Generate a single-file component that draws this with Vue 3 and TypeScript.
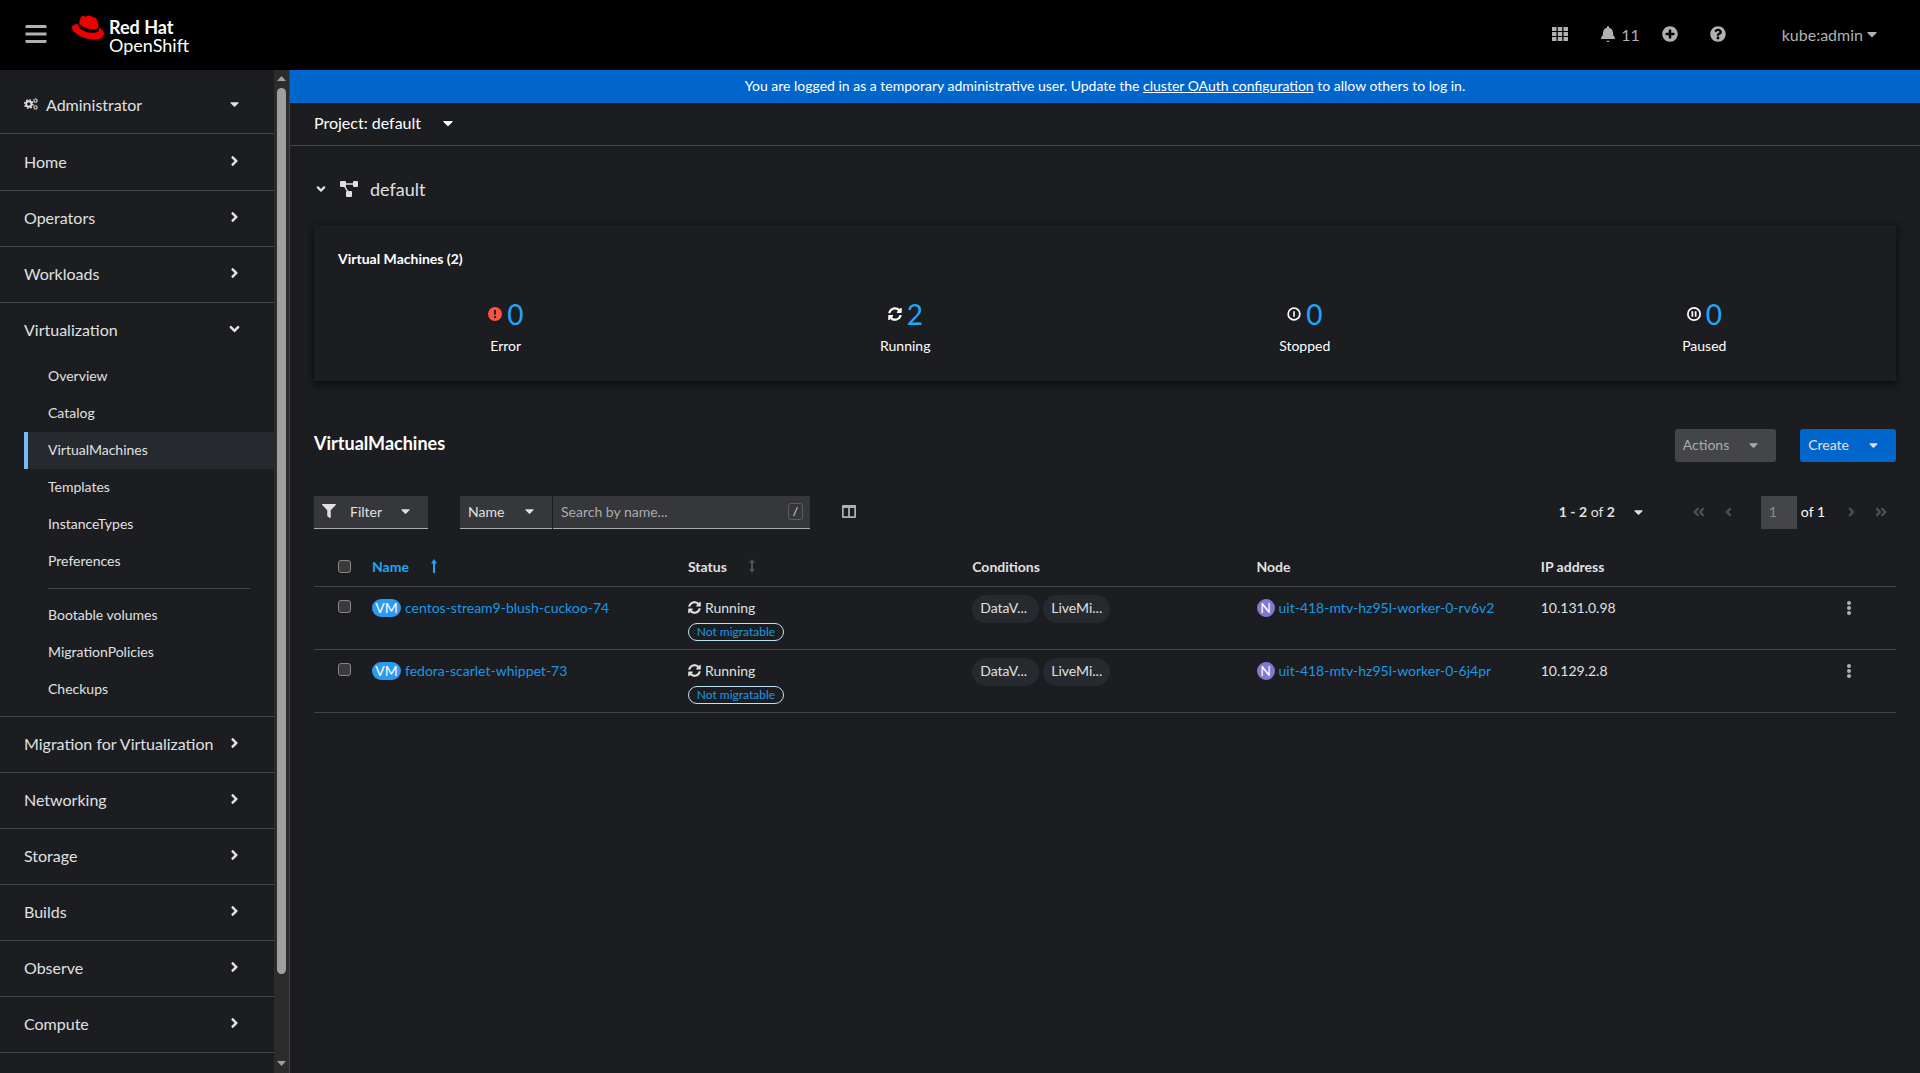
<script setup lang="ts">
import { ref } from 'vue'

interface VirtualMachine {
  name: string
  node: string
  ip: string
}

const icons: Record<string, { box: string; d: string }> = {
  caret: {
    box: '0 0 320 512',
    d: 'M31.3 192h257.3c17.8 0 26.7 21.5 14.1 34.1L174.1 354.8c-7.8 7.8-20.5 7.8-28.3 0L17.2 226.1C4.6 213.5 13.5 192 31.3 192z',
  },
  angle: {
    box: '0 0 256 512',
    d: 'M224.3 273l-136 136c-9.4 9.4-24.6 9.4-33.9 0l-22.6-22.6c-9.4-9.4-9.4-24.6 0-33.9l96.4-96.4-96.4-96.4c-9.4-9.4-9.4-24.6 0-33.9L54.3 103c9.4-9.4 24.6-9.4 33.9 0l136 136c9.5 9.4 9.5 24.6.1 34z',
  },
  bell: {
    box: '0 0 448 512',
    d: 'M224 512c35.3 0 50-20 50-40H174c0 20 14.7 40 50 40zm215.4-149.7c-19.3-20.8-55.5-52-55.5-154.3 0-77.7-54.5-139.9-127.9-155.2V32c0-17.7-14.3-32-32-32s-32 14.3-32 32v20.8C118.6 68.1 64.1 130.3 64.1 208c0 102.3-36.2 133.5-55.5 154.3-6 6.4-8.7 14.2-8.6 21.7.1 16.4 13 32 32.1 32h383.8c19.1 0 32-15.6 32.1-32 .05-7.5-2.6-15.3-8.6-21.7z',
  },
  plus: {
    box: '0 0 512 512',
    d: 'M256 8C119 8 8 119 8 256s111 248 248 248 248-111 248-248S393 8 256 8zm144 276c0 6.6-5.4 12-12 12h-92v92c0 6.6-5.4 12-12 12h-56c-6.6 0-12-5.4-12-12v-92h-92c-6.6 0-12-5.4-12-12v-56c0-6.6 5.4-12 12-12h92v-92c0-6.6 5.4-12 12-12h56c6.6 0 12 5.4 12 12v92h92c6.6 0 12 5.4 12 12v56z',
  },
  help: {
    box: '0 0 512 512',
    d: 'M504 256c0 136.997-111.043 248-248 248S8 392.997 8 256C8 119.083 119.043 8 256 8s248 111.083 248 248zM262.655 90c-54.497 0-89.255 22.957-116.549 63.758-3.536 5.286-2.353 12.415 2.715 16.258l34.699 26.31c5.205 3.947 12.621 3.008 16.665-2.122 17.864-22.658 30.113-35.797 57.303-35.797 20.429 0 45.698 13.148 45.698 32.958 0 14.976-12.363 22.667-32.534 33.976C247.128 238.528 216 254.941 216 296v4c0 6.627 5.373 12 12 12h56c6.627 0 12-5.373 12-12v-1.333c0-28.462 83.186-29.647 83.186-106.667 0-58.002-60.165-102-116.531-102zM256 338c-25.365 0-46 20.635-46 46 0 25.364 20.635 46 46 46s46-20.636 46-46c0-25.364-20.635-46-46-46z',
  },
  sync: {
    box: '0 0 512 512',
    d: 'M370.72 133.28C339.458 104.008 298.888 87.962 255.848 88c-77.458.068-144.328 53.178-162.791 126.85-1.344 5.363-6.122 9.15-11.651 9.15H24.103c-7.498 0-13.194-6.807-11.807-14.176C33.933 94.924 134.813 8 256 8c66.448 0 126.791 26.136 171.315 68.685L463.03 40.97C478.149 25.851 504 36.559 504 57.941V192c0 13.255-10.745 24-24 24H345.941c-21.382 0-32.09-25.851-16.971-40.971l41.75-41.749zM32 296h134.059c21.382 0 32.09 25.851 16.971 40.971l-41.75 41.75c31.262 29.273 71.835 45.319 114.876 45.28 77.418-.07 144.315-53.144 162.787-126.849 1.344-5.363 6.122-9.15 11.651-9.15h57.304c7.498 0 13.194 6.807 11.807 14.176C478.067 417.076 377.187 504 256 504c-66.448 0-126.791-26.136-171.315-68.685L48.97 471.03C33.851 486.149 8 475.441 8 454.059V320c0-13.255 10.745-24 24-24z',
  },
  filter: {
    box: '0 0 512 512',
    d: 'M487.976 0H24.028C2.71 0-8.047 25.866 7.058 40.971L192 225.941V432c0 7.831 3.821 15.17 10.237 19.662l80 55.98C298.02 518.69 320 507.493 320 487.98V225.941l184.947-184.97C520.021 25.896 509.338 0 487.976 0z',
  },
  error: {
    box: '0 0 14 14',
    d: 'M7 0a7 7 0 1 1 0 14A7 7 0 0 1 7 0zM5.9 3l.3 4.8h1.6L8.1 3zM7 8.9a1.2 1.2 0 1 0 0 2.4 1.2 1.2 0 0 0 0-2.4z',
  },
  stopped: {
    box: '0 0 14 14',
    d: 'M7 .3a6.7 6.7 0 1 1 0 13.4A6.7 6.7 0 0 1 7 .3zM7 2a5 5 0 1 0 0 10A5 5 0 0 0 7 2zM6.2 4.2h1.6v5.6H6.2z',
  },
  paused: {
    box: '0 0 14 14',
    d: 'M7 0a7 7 0 1 1 0 14A7 7 0 0 1 7 0zM7 1.7a5.3 5.3 0 1 0 0 10.6A5.3 5.3 0 0 0 7 1.7zM4.5 4.2h1.7v5.6H4.5zM7.8 4.2h1.7v5.6H7.8z',
  },
}

const sectionsBefore = ['Home', 'Operators', 'Workloads']
const sectionsAfter = ['Migration for Virtualization', 'Networking', 'Storage', 'Builds', 'Observe', 'Compute']
const virtualizationMain = ['Overview', 'Catalog', 'VirtualMachines', 'Templates', 'InstanceTypes', 'Preferences']
const virtualizationExtra = ['Bootable volumes', 'MigrationPolicies', 'Checkups']

const statuses = [
  { label: 'Error', count: 0, icon: 'error' },
  { label: 'Running', count: 2, icon: 'sync' },
  { label: 'Stopped', count: 0, icon: 'stopped' },
  { label: 'Paused', count: 0, icon: 'paused' },
]

const machines: VirtualMachine[] = [
  { name: 'centos-stream9-blush-cuckoo-74', node: 'uit-418-mtv-hz95l-worker-0-rv6v2', ip: '10.131.0.98' },
  { name: 'fedora-scarlet-whippet-73', node: 'uit-418-mtv-hz95l-worker-0-6j4pr', ip: '10.129.2.8' },
]

const search = ref('')
</script>

<template>
  <div class="page">
    <header class="masthead">
      <button class="plain menu" aria-label="Global navigation">
        <svg width="22" height="20" viewBox="0 0 22 20"><path d="M1.5 1h19a1 1 0 0 1 1 1v2h-21V2a1 1 0 0 1 1-1zM.5 8.500h21v3H.5zM.5 16h21v2a1 1 0 0 1-1 1h-19a1 1 0 0 1-1-1z" /></svg>
      </button>
      <a class="brand" href="#" aria-label="Red Hat OpenShift">
        <svg class="hat" width="32" height="25" viewBox="0 2.9 24 18.2">
          <path d="M16.009 13.386c1.577 0 3.86-.326 3.86-2.202a1.765 1.765 0 0 0-.04-.431l-.94-4.08c-.216-.898-.406-1.305-1.982-2.093-1.223-.625-3.888-1.658-4.676-1.658-.733 0-.947.946-1.822.946-.842 0-1.467-.706-2.255-.706-.757 0-1.25.515-1.63 1.576 0 0-1.06 2.99-1.197 3.424a.81.81 0 0 0-.028.245c0 1.162 4.577 4.974 10.71 4.974m4.101-1.435c.218 1.032.218 1.14.218 1.277 0 1.765-1.984 2.745-4.593 2.745-5.895.004-11.06-3.451-11.06-5.734a2.326 2.326 0 0 1 .19-.925C2.746 9.415 0 9.794 0 12.217c0 3.969 9.405 8.861 16.851 8.861 5.71 0 7.149-2.582 7.149-4.62 0-1.605-1.387-3.425-3.887-4.512" />
        </svg>
        <span class="wordmark"><b>Red Hat</b><span>OpenShift</span></span>
      </a>
      <div class="tools">
        <button class="plain apps" aria-label="Application launcher">
          <svg width="16" height="14" viewBox="0 0 16 14"><path d="M0 0h4.5v4H0zM5.8 0h4.4v4H5.8zM11.5 0H16v4h-4.5zM0 5h4.5v4H0zM5.8 5h4.4v4H5.8zM11.5 5H16v4h-4.5zM0 10h4.5v4H0zM5.8 10h4.4v4H5.8zM11.5 10H16v4h-4.5z" /></svg>
        </button>
        <button class="plain alerts" aria-label="11 notifications">
          <svg width="14" height="16" :viewBox="icons.bell.box"><path :d="icons.bell.d" /></svg>
          <span>11</span>
        </button>
        <button class="plain" aria-label="Quick create"><svg width="16" height="16" :viewBox="icons.plus.box"><path :d="icons.plus.d" /></svg></button>
        <button class="plain" aria-label="Help"><svg width="16" height="16" :viewBox="icons.help.box"><path :d="icons.help.d" /></svg></button>
        <button class="plain user">kube:admin<svg width="10" height="16" :viewBox="icons.caret.box"><path :d="icons.caret.d" /></svg></button>
      </div>
    </header>

    <div class="body">
      <aside class="sidebar">
        <nav class="nav">
          <div class="perspective">
            <button class="plain nav-button">
              <svg class="cogs" width="14" height="12" viewBox="0 0 14 12">
                <circle cx="4.8" cy="6" r="2.7" stroke-width="1.9" />
                <circle cx="4.8" cy="6" r="4.2" stroke-width="1.4" stroke-dasharray="1.7 1.6" />
                <circle cx="11.6" cy="2.6" r="1.4" stroke-width="1" />
                <circle cx="11.6" cy="2.6" r="2.1" stroke-width=".7" stroke-dasharray="1 .65" />
                <circle cx="11.6" cy="9.4" r="1.4" stroke-width="1" />
                <circle cx="11.6" cy="9.4" r="2.1" stroke-width=".7" stroke-dasharray="1 .65" />
              </svg>
              <span class="grow">Administrator</span>
              <svg width="9" height="14" :viewBox="icons.caret.box"><path :d="icons.caret.d" /></svg>
            </button>
          </div>
          <ul class="sections">
            <li v-for="label in sectionsBefore" :key="label">
              <button class="plain nav-button"><span class="grow">{{ label }}</span><svg width="9" height="16" :viewBox="icons.angle.box"><path :d="icons.angle.d" /></svg></button>
            </li>
            <li>
              <button class="plain nav-button" aria-expanded="true"><span class="grow">Virtualization</span><svg class="down" width="9" height="16" :viewBox="icons.angle.box"><path :d="icons.angle.d" /></svg></button>
              <div class="children">
                <a v-for="label in virtualizationMain" :key="label" href="#" :class="{ current: label === 'VirtualMachines' }">{{ label }}</a>
                <hr />
                <a v-for="label in virtualizationExtra" :key="label" href="#">{{ label }}</a>
              </div>
            </li>
            <li v-for="label in sectionsAfter" :key="label">
              <button class="plain nav-button"><span class="grow">{{ label }}</span><svg width="9" height="16" :viewBox="icons.angle.box"><path :d="icons.angle.d" /></svg></button>
            </li>
          </ul>
        </nav>
        <div class="scrollbar" aria-hidden="true">
          <svg width="9" height="5" viewBox="0 0 9 5"><path d="M4.5 0L9 5H0z" /></svg>
          <div class="track"><div class="thumb"></div><div class="rest"></div></div>
          <svg width="9" height="5" viewBox="0 0 9 5"><path d="M0 0h9L4.5 5z" /></svg>
        </div>
      </aside>

      <main class="main">
        <div class="banner">You are logged in as a temporary administrative user. Update the <a href="#">cluster OAuth configuration</a> to allow others to log in.</div>
        <div class="project-bar">
          <button class="plain project">Project: default<svg width="10" height="16" :viewBox="icons.caret.box"><path :d="icons.caret.d" /></svg></button>
        </div>

        <div class="content">
          <button class="plain group">
            <svg class="down" width="14" height="14" :viewBox="icons.angle.box"><path :d="icons.angle.d" /></svg>
            <svg width="18" height="16" viewBox="0 0 18 16"><path d="M1 0h4a1 1 0 0 1 1 1v1.3h7V1a1 1 0 0 1 1-1h3a1 1 0 0 1 1 1v4a1 1 0 0 1-1 1h-3a1 1 0 0 1-1-1V3.7H6V5a1 1 0 0 1-.3.7L8.2 10H11a1 1 0 0 1 1 1v4a1 1 0 0 1-1 1H7a1 1 0 0 1-1-1v-4l.7-.8L4.2 6H1a1 1 0 0 1-1-1V1a1 1 0 0 1 1-1z" /></svg>
            <span>default</span>
          </button>

          <section class="card">
            <h2>Virtual Machines (2)</h2>
            <div class="status-grid">
              <div v-for="s in statuses" :key="s.label" class="status">
                <div class="count">
                  <svg :class="s.icon" width="14" height="14" :viewBox="icons[s.icon].box"><path fill-rule="evenodd" :d="icons[s.icon].d" /></svg>
                  <a href="#">{{ s.count }}</a>
                </div>
                <span>{{ s.label }}</span>
              </div>
            </div>
          </section>

          <div class="title-row">
            <h1>VirtualMachines</h1>
            <div class="actions">
              <button class="action" disabled>Actions<svg width="9" height="14" :viewBox="icons.caret.box"><path :d="icons.caret.d" /></svg></button>
              <button class="action primary">Create<svg width="9" height="14" :viewBox="icons.caret.box"><path :d="icons.caret.d" /></svg></button>
            </div>
          </div>

          <div class="toolbar">
            <button class="field filter">
              <svg width="14" height="14" :viewBox="icons.filter.box"><path :d="icons.filter.d" /></svg>
              <span class="grow">Filter</span>
              <svg width="9" height="14" :viewBox="icons.caret.box"><path :d="icons.caret.d" /></svg>
            </button>
            <div class="search-group">
              <div class="field attribute">
                <select aria-label="Filter attribute"><option>Name</option><option>Label</option></select>
                <svg width="9" height="14" :viewBox="icons.caret.box"><path :d="icons.caret.d" /></svg>
              </div>
              <div class="field search">
                <input v-model="search" type="text" placeholder="Search by name..." aria-label="Search by name" />
                <kbd>/</kbd>
              </div>
            </div>
            <button class="plain columns" aria-label="Manage columns">
              <svg width="14" height="13" viewBox="0 0 14 13"><path fill-rule="evenodd" d="M1 0h12a1 1 0 0 1 1 1v11a1 1 0 0 1-1 1H1a1 1 0 0 1-1-1V1a1 1 0 0 1 1-1zM1.7 3v8.3h4.4V3zM7.900 3v8.300h4.400V3z" /></svg>
            </button>
            <div class="pagination">
              <button class="plain range"><span><b>1 - 2</b> of <b>2</b></span><svg width="9" height="14" :viewBox="icons.caret.box"><path :d="icons.caret.d" /></svg></button>
              <button class="plain step" disabled aria-label="First page">
                <svg class="back" width="12" height="14" viewBox="0 0 440 512"><path :d="icons.angle.d" /><path transform="translate(192 0)" :d="icons.angle.d" /></svg>
              </button>
              <button class="plain step" disabled aria-label="Previous page"><svg class="back" width="7" height="14" :viewBox="icons.angle.box"><path :d="icons.angle.d" /></svg></button>
              <label class="page-number"><input type="text" value="1" disabled aria-label="Current page" /><span>of 1</span></label>
              <button class="plain step" disabled aria-label="Next page"><svg width="7" height="14" :viewBox="icons.angle.box"><path :d="icons.angle.d" /></svg></button>
              <button class="plain step" disabled aria-label="Last page">
                <svg width="12" height="14" viewBox="0 0 440 512"><path :d="icons.angle.d" /><path transform="translate(192 0)" :d="icons.angle.d" /></svg>
              </button>
            </div>
          </div>

          <table class="vms">
            <colgroup>
              <col class="c-check" /><col class="c-name" /><col /><col /><col /><col /><col class="c-menu" />
            </colgroup>
            <thead>
              <tr>
                <th class="check"><input type="checkbox" aria-label="Select all rows" /></th>
                <th><button class="plain sort sorted">Name<svg width="6" height="14" viewBox="0 0 6 14"><path d="M3 0l3 4.5H4V14H2V4.5H0z" /></svg></button></th>
                <th><button class="plain sort">Status<svg width="6" height="14" viewBox="0 0 6 14"><path d="M3 0l3 4H4v6h2l-3 4-3-4h2V4H0z" /></svg></button></th>
                <th>Conditions</th>
                <th>Node</th>
                <th>IP address</th>
                <th></th>
              </tr>
            </thead>
            <tbody>
              <tr v-for="vm in machines" :key="vm.name">
                <td class="check"><input type="checkbox" :aria-label="'Select ' + vm.name" /></td>
                <td><div class="line"><span class="badge vm">VM</span><a href="#">{{ vm.name }}</a></div></td>
                <td>
                  <div class="line"><svg width="13" height="13" :viewBox="icons.sync.box"><path :d="icons.sync.d" /></svg>Running</div>
                  <a class="pill" href="#">Not migratable</a>
                </td>
                <td class="conditions"><div class="chips"><span>DataV...</span><span>LiveMi...</span></div></td>
                <td><div class="line"><span class="badge node">N</span><a href="#">{{ vm.node }}</a></div></td>
                <td><div class="line">{{ vm.ip }}</div></td>
                <td class="menu-cell">
                  <button class="plain" :aria-label="'Actions for ' + vm.name"><svg width="4" height="14" viewBox="0 0 4 14"><circle cx="2" cy="2" r="2" /><circle cx="2" cy="7" r="2" /><circle cx="2" cy="12" r="2" /></svg></button>
                </td>
              </tr>
            </tbody>
          </table>
        </div>
      </main>
    </div>
  </div>
</template>

<style>
body {
  background: #1b1d21;
}
</style>

<style scoped>
* {
  box-sizing: border-box;
}
.page {
  display: flex;
  flex-direction: column;
  height: 100vh;
  overflow: hidden;
  background: #1b1d21;
  color: #e0e0e0;
  font: 14px/21px Lato, 'Liberation Sans', sans-serif;
}
svg {
  display: block;
  flex: none;
  fill: currentColor;
}
button,
input,
select {
  font: inherit;
  color: inherit;
}
button {
  cursor: pointer;
}
.plain {
  display: flex;
  align-items: center;
  padding: 0;
  border: 0;
  background: none;
}
a {
  color: #1f98e4;
  text-decoration: none;
}
h1,
h2 {
  margin: 0;
  color: #fff;
}
.grow {
  flex: 1;
  text-align: left;
}
.down {
  transform: rotate(90deg);
}
.back {
  transform: rotate(180deg);
}

/* Masthead */
.masthead {
  display: flex;
  align-items: center;
  flex: none;
  height: 70px;
  padding: 0 43px 2px 25px;
  background: #000;
  color: #b0b1b3;
}
.brand {
  display: flex;
  align-items: flex-start;
  gap: 5px;
  height: 38px;
  margin-left: 25px;
  color: #fff;
}
.hat {
  fill: #e00;
}
.wordmark {
  display: flex;
  flex-direction: column;
  padding-top: 3px;
  font-size: 18px;
  line-height: 18px;
}
.tools {
  display: flex;
  align-items: center;
  gap: 32px;
  margin-left: auto;
  font-size: 16px;
}
.apps {
  margin-right: 1px;
}
.alerts {
  gap: 6px;
  margin-right: -10px;
}
.user {
  gap: 4px;
  margin-left: 24px;
}

/* Sidebar */
.body {
  display: flex;
  flex: 1;
  min-height: 0;
}
.sidebar {
  display: flex;
  flex: none;
  width: 290px;
  overflow: hidden;
  border-right: 1px solid #444548;
}
.nav {
  flex: 1;
  overflow: hidden;
}
.perspective {
  height: 64px;
  padding-top: 8px;
  border-bottom: 1px solid #444548;
}
.nav-button {
  width: 100%;
  height: 55px;
  padding: 0 35px 3px 24px;
  font-size: 16px;
}
.cogs {
  margin-right: 8px;
  fill: none;
  stroke: currentColor;
}
.sections {
  margin: 0;
  padding: 1px 0 0;
  list-style: none;
}
.sections li {
  border-bottom: 1px solid #444548;
}
.children {
  padding-bottom: 8px;
}
.children a {
  display: block;
  margin-left: 24px;
  padding: 7px 0 9px 24px;
  color: inherit;
}
.children .current {
  padding-left: 20px;
  border-left: 4px solid #73bcf7;
  background: #26292d;
}
.children hr {
  height: 1px;
  margin: 8px 24px 8px 48px;
  border: 0;
  background: #444548;
}
.scrollbar {
  display: flex;
  flex-direction: column;
  align-items: center;
  width: 15px;
  padding: 6px 0 7px;
  background: #2c2c2c;
  color: #9f9f9f;
}
.track {
  display: flex;
  flex: 1;
  flex-direction: column;
  width: 9px;
  padding: 7px 0;
}
.thumb {
  flex: 11;
  border-radius: 5px;
  background: #9f9f9f;
}
.rest {
  flex: 1;
}

/* Main column */
.main {
  flex: 1;
  min-width: 0;
}
.banner {
  padding: 5px 24px 7px;
  background: #06c;
  color: #fff;
  text-align: center;
}
.banner a {
  color: inherit;
  text-decoration: underline;
}
.project-bar {
  height: 43px;
  padding: 8px 24px;
  border-bottom: 1px solid #444548;
}
.project {
  gap: 22px;
  color: #fff;
  font-size: 16px;
  line-height: 24px;
}
.content {
  padding: 31px 24px;
}
.group {
  gap: 12px;
  font-size: 18px;
  line-height: 24px;
}
.card {
  margin-top: 24px;
  padding: 23px 24px;
  height: 156px;
  box-shadow: 0 4px 8px rgba(0, 0, 0, 0.5), 0 0 6px rgba(0, 0, 0, 0.3);
}
.card h2 {
  font-size: 14px;
  line-height: 21px;
}
.status-grid {
  display: grid;
  grid-template-columns: repeat(4, 1fr);
  gap: 64px;
  margin-top: 27px;
}
.status {
  display: flex;
  flex-direction: column;
  gap: 3px;
  align-items: center;
  color: #fff;
}
.count {
  display: flex;
  align-items: center;
  gap: 5px;
  font-size: 28px;
  line-height: 36px;
}
.count a {
  color: #1fa7f8;
}
.count .error {
  color: #fe5142;
}
.title-row {
  display: flex;
  align-items: flex-start;
  justify-content: space-between;
  margin-top: 48px;
}
.title-row h1 {
  font-size: 18px;
  line-height: 28px;
}
.actions {
  display: flex;
  gap: 24px;
}
.action {
  display: flex;
  align-items: center;
  gap: 20px;
  height: 33px;
  padding: 0 18px 2px 8px;
  border: 0;
  border-radius: 3px;
  background: #444548;
  color: #aaabac;
}
.primary {
  background: #06c;
  color: #e0e0e0;
}

/* Toolbar */
.toolbar {
  display: flex;
  align-items: center;
  margin-top: 34px;
}
.field {
  display: flex;
  align-items: center;
  height: 33px;
  padding: 0 7px 2px 8px;
  border: 0;
  border-bottom: 1px solid #aaabac;
  background: #36373a;
}
.filter {
  width: 114px;
  padding-right: 18px;
}
.filter .grow {
  margin-left: 14px;
}
.search-group {
  display: flex;
  gap: 1px;
  margin-left: 32px;
}
.attribute {
  position: relative;
  width: 92px;
}
.attribute svg {
  position: absolute;
  right: 18px;
  pointer-events: none;
}
.attribute select {
  flex: 1;
  padding: 0;
  border: 0;
  background: none;
  appearance: none;
}
.search {
  width: 257px;
}
.search input {
  flex: 1;
  min-width: 0;
  padding: 0;
  border: 0;
  outline: 0;
  background: none;
}
.search input::placeholder {
  color: #aaabac;
  opacity: 1;
}
kbd {
  width: 15px;
  border: 1px solid #5c5d60;
  border-radius: 3px;
  font: inherit;
  font-size: 12px;
  line-height: 15px;
  text-align: center;
}
.columns {
  margin-left: 32px;
  padding-bottom: 2px;
  color: #b0b1b3;
}
.pagination {
  display: flex;
  align-items: center;
  margin-left: auto;
  padding-right: 9px;
}
.range {
  gap: 19px;
  margin-right: 50px;
  padding-bottom: 2px;
}
.step {
  justify-content: center;
  width: 12px;
  margin-right: 18px;
  padding-bottom: 2px;
  color: #4f5255;
}
.step:last-child {
  margin-right: 0;
}
.page-number {
  display: flex;
  align-items: center;
  gap: 4px;
  margin: 0 20px 0 8px;
  color: #fff;
}
.page-number span {
  padding-bottom: 2px;
}
.page-number input {
  width: 36px;
  height: 33px;
  padding: 0 8px 2px;
  border: 0;
  background: #444548;
  color: #8a8d90;
}

/* Table */
.vms {
  width: 100%;
  margin-top: 18px;
  border-collapse: collapse;
  table-layout: fixed;
}
.c-check {
  width: 58px;
}
.c-name {
  width: 316px;
}
.c-menu {
  width: 71px;
}
tr {
  border-bottom: 1px solid #444548;
}
th {
  height: 39px;
  padding: 0;
  text-align: left;
}
td {
  height: 63px;
  padding: 9px 0 0;
  vertical-align: top;
}
.check {
  padding-left: 24px;
}
.check input {
  display: block;
  width: 13px;
  height: 13px;
  margin: 0;
  border: 1px solid #858585;
  border-radius: 3px;
  background: #3b3b3b;
  appearance: none;
}
td.check {
  padding-top: 13px;
}
.sort {
  gap: 22px;
  font-weight: bold;
}
.sort svg {
  color: #4f5255;
}
.sorted,
.sorted svg {
  color: #1fa7f8;
}
.line {
  display: flex;
  align-items: center;
  gap: 4px;
  height: 24px;
}
.badge {
  border-radius: 9px;
  color: #fff;
  line-height: 18px;
  text-align: center;
}
.vm {
  width: 29px;
  background: #2b9af3;
}
.node {
  width: 18px;
  background: #8476d1;
}
.pill {
  display: inline-block;
  width: 96px;
  margin-top: 3px;
  border: 1px solid #bee1f4;
  border-radius: 9px;
  font-size: 12px;
  line-height: 16px;
  text-align: center;
  vertical-align: top;
}
.conditions {
  padding-top: 8px;
}
.chips {
  display: flex;
  gap: 4px;
}
.chips span {
  width: 67px;
  padding: 0 0 2px 8px;
  border-radius: 14px;
  background: #26292d;
  line-height: 26px;
}
.menu-cell button {
  height: 24px;
  margin-left: 22px;
  color: #b0b1b3;
}
</style>
